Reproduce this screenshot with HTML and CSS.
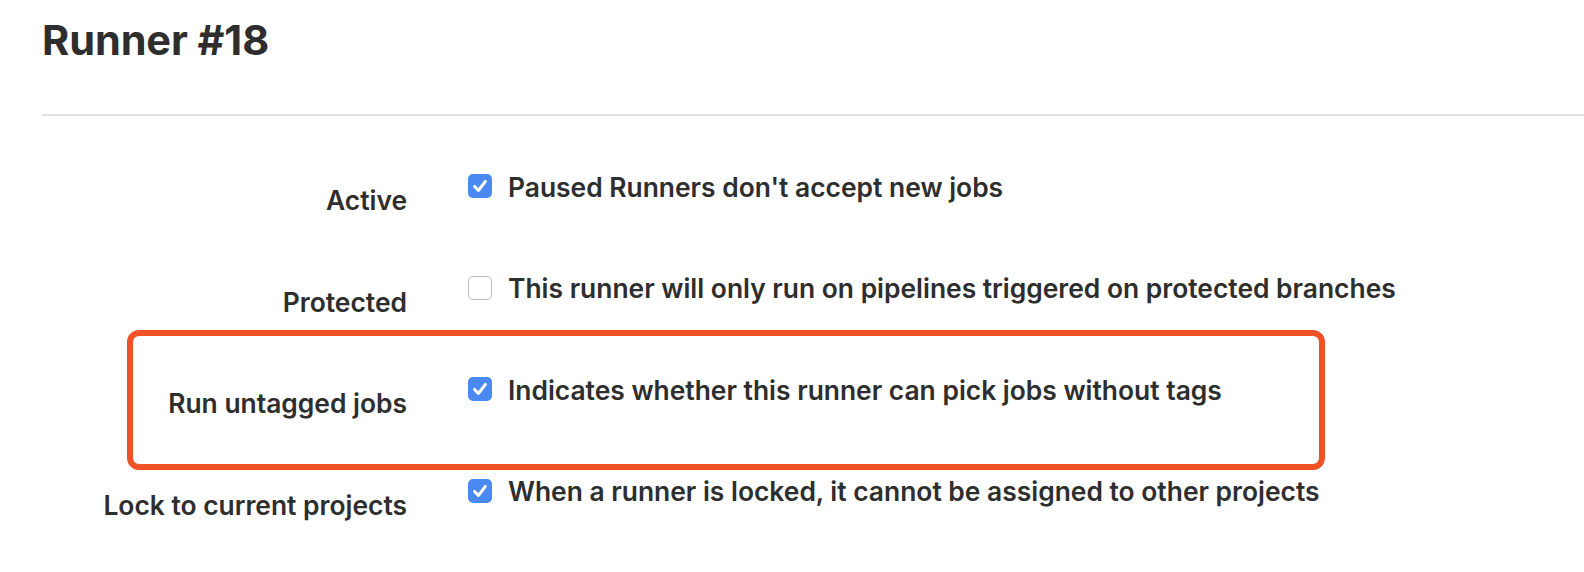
FILE: index.html
```html
<!DOCTYPE html>
<html>
<head>
<meta charset="utf-8">
<link rel="stylesheet" href="styles.css">
</head>
<body>
<div class="page">
  <h1 class="title">Runner #18</h1>
  <hr class="divider">
  <form class="form">
    <div class="row">
      <div class="label">Active</div>
      <span class="check checked"><svg viewBox="0 0 24 24"><path d="M6.6 12.4l3.8 4.1L17.4 7.4" /></svg></span>
      <div class="desc">Paused Runners don't accept new jobs</div>
    </div>
    <div class="row">
      <div class="label">Protected</div>
      <span class="check"></span>
      <div class="desc">This runner will only run on pipelines triggered on protected branches</div>
    </div>
    <div class="row highlighted">
      <div class="label">Run untagged jobs</div>
      <span class="check checked"><svg viewBox="0 0 24 24"><path d="M6.6 12.4l3.8 4.1L17.4 7.4" /></svg></span>
      <div class="desc">Indicates whether this runner can pick jobs without tags</div>
    </div>
    <div class="row">
      <div class="label">Lock to current projects</div>
      <span class="check checked"><svg viewBox="0 0 24 24"><path d="M6.6 12.4l3.8 4.1L17.4 7.4" /></svg></span>
      <div class="desc">When a runner is locked, it cannot be assigned to other projects</div>
    </div>
  </form>
</div>
</body>
</html>
```

FILE: styles.css
```css
* { box-sizing: border-box; }
html, body { margin: 0; padding: 0; background: #fff; }
body {
  font-family: Inter, "Noto Sans", "Liberation Sans", sans-serif;
  color: #2e2e2e;
}
.page {
  padding-left: 42px;
  padding-top: 15px;
}
.title {
  margin: 0;
  font-size: 41.5px;
  line-height: 50px;
  font-weight: 700;
  letter-spacing: -0.1px;
}
.divider {
  margin: 49px 0 0 0;
  border: 0;
  border-top: 2px solid #e0e0e0;
  height: 0;
}
.form {
  margin-top: 55.5px;
}
.row {
  display: flex;
  align-items: flex-start;
  height: 101.5px;
  position: relative;
}
.label {
  width: 365px;
  text-align: right;
  font-size: 26.4px;
  line-height: 30px;
  font-weight: 600;
  margin-top: 13.5px;
}
.check {
  width: 24px;
  height: 24px;
  margin-top: 2.5px;
  margin-left: 61px;
  margin-right: 16px;
  border-radius: 5px;
  border: 1.5px solid #bdbdbd;
  background: #fff;
  flex: none;
  display: flex;
}
.check.checked {
  background: #4a88f2;
  border: 0;
}
.check svg {
  width: 100%;
  height: 100%;
  fill: none;
  stroke: #fff;
  stroke-width: 3;
  stroke-linecap: round;
  stroke-linejoin: round;
}
.desc {
  font-size: 26.4px;
  line-height: 30px;
  font-weight: 600;
}
.highlighted::before {
  content: "";
  position: absolute;
  left: 85px;
  top: -44.5px;
  width: 1186px;
  height: 128px;
  border: 6px solid #f05226;
  border-radius: 12px;
  pointer-events: none;
}
```
